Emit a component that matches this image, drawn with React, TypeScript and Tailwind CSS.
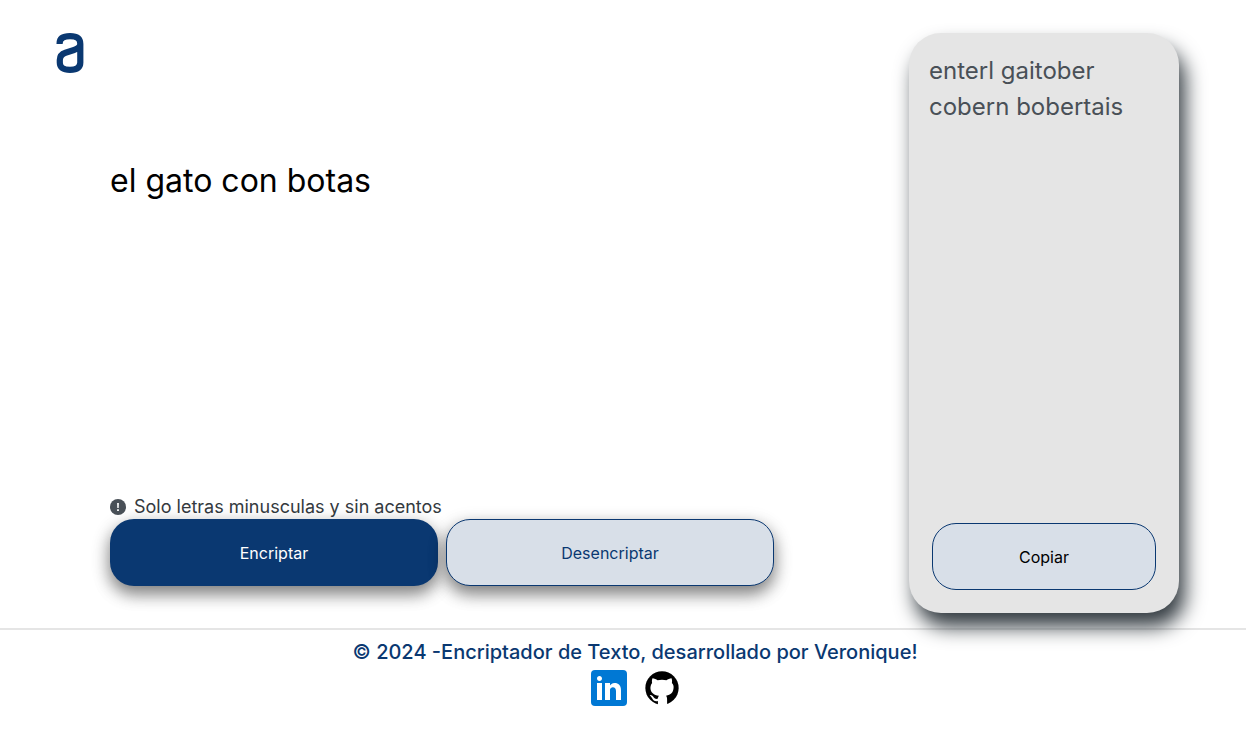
import { useState } from "react";

const initialText = "el gato con botas";
const initialResult = "enterl gaitober cobern bobertais";

const pairs: [string, string][] = [
  ["e", "enter"],
  ["i", "imes"],
  ["a", "ai"],
  ["o", "ober"],
  ["u", "ufat"],
];

function encrypt(text: string) {
  return text.replace(/[eiaou]/g, (letter) => pairs.find(([plain]) => plain === letter)![1]);
}

function decrypt(text: string) {
  return pairs.reduce((acc, [plain, coded]) => acc.split(coded).join(plain), text);
}

function Logo() {
  return (
    <svg className="h-10 w-7" viewBox="0 0 28 40" fill="none" stroke="#0a3871" strokeWidth="6.2" aria-hidden="true">
      <path d="M3.6 11V10.500C3.6 5.600 7 3.200 14 3.200C21 3.200 24.300 5.600 24.300 11V29.500C24.300 34.500 21 36.800 14 36.800C7 36.800 3.800 34.500 3.800 29.500V27C3.800 23 5.500 21 9.500 19.700L18 17C22 15.700 24.300 14 24.300 11" />
    </svg>
  );
}

function AlertIcon() {
  return (
    <svg className="size-4" viewBox="0 0 16 16" aria-hidden="true">
      <circle cx="8" cy="8" r="8" fill="#495057" />
      <path d="M7.100 4h1.800l-.2 5H7.300zM7.100 10.200h1.800V12H7.100z" fill="#fff" />
    </svg>
  );
}

function LinkedinIcon() {
  return (
    <svg className="size-9" viewBox="6 6 36 36" aria-hidden="true">
      <rect x="6" y="6" width="36" height="36" rx="4" fill="#0078d4" />
      <path
        fill="#fff"
        d="M12 19h5v17h-5zM14.485 17h-.028C12.965 17 12 15.888 12 14.499 12 13.080 12.995 12 14.514 12c1.521 0 2.458 1.080 2.486 2.499C17 15.887 16.035 17 14.485 17zM36 36h-5v-9.099c0-2.198-1.225-3.698-3.192-3.698-1.501 0-2.313 1.012-2.707 1.990C24.957 25.543 25 26.511 25 27v9h-5V19h5v2.616C25.721 20.500 26.850 19 29.738 19c3.578 0 6.261 2.250 6.261 7.274L36 36z"
      />
    </svg>
  );
}

function GithubIcon() {
  return (
    <svg className="size-[34px]" viewBox="0 0 100 100" aria-hidden="true">
      <circle cx="50" cy="50" r="49" />
      <path
        fill="#fff"
        d="M22 21C27 21 33 24 37 27C45 25 55 25 63 27C67 24 73 21 78 21C80 26 80 31 79 35C83 39 85 44 84 50C83 63 76 70 62 73C64 76 65 79 65 84V100H38V88C30 90 24 87 21 80C19 76 17 74 14 71C20 70 23 74 26 78C29 82 33 83 38 81C38 78 39 75 41 73C26 71 16 63 16 50C16 44 18 39 21 35C20 31 20 26 22 21Z"
      />
    </svg>
  );
}

export default function App() {
  const [text, setText] = useState(initialText);
  const [result, setResult] = useState(initialResult);

  return (
    <div className="min-h-screen bg-white font-['Inter',sans-serif]">
      <div className="flex pt-[33px] pr-[67px] pb-[15px] pl-14">
        <header className="w-[54px] shrink-0">
          <a href="#" aria-label="Inicio" className="block w-7">
            <Logo />
          </a>
        </header>

        <main className="flex flex-1 justify-between">
          <section className="flex w-[664px] flex-col pt-[124px] pb-[27px]">
            <textarea
              aria-label="Texto"
              className="w-full flex-1 resize-none text-[32px] leading-12 text-black outline-none"
              value={text}
              onChange={(event) => setText(event.target.value)}
            />
            <p className="flex items-center gap-2 text-lg leading-6 text-[#343a40]">
              <AlertIcon />
              Solo letras minusculas y sin acentos
            </p>
            <div className="grid grid-cols-2 gap-2">
              <button
                type="button"
                onClick={() => setResult(encrypt(text))}
                className="h-[67px] rounded-3xl bg-[#0a3871] text-base text-white shadow-[0_8px_16px_rgba(0,0,0,0.4),0_6px_20px_rgba(0,0,0,0.19)]"
              >
                Encriptar
              </button>
              <button
                type="button"
                onClick={() => setResult(decrypt(text))}
                className="h-[67px] rounded-3xl border border-[#0a3871] bg-[#d8dfe8] text-base text-[#0a3871] shadow-[0_8px_16px_rgba(0,0,0,0.4),0_6px_20px_rgba(0,0,0,0.19)]"
              >
                Desencriptar
              </button>
            </div>
          </section>

          <aside className="flex h-[580px] w-[270px] flex-col rounded-[32px] bg-[#e5e5e5] px-5 pt-5 pb-[23px] shadow-[6px_14px_20px_#343c42]">
            <output className="flex-1 text-2xl leading-9 text-[#495057]">{result}</output>
            <button
              type="button"
              onClick={() => navigator.clipboard?.writeText(result)}
              className="mx-[3px] h-[67px] rounded-3xl border border-[#0a3871] bg-[#d8dfe8] text-base text-black"
            >
              Copiar
            </button>
          </aside>
        </main>
      </div>

      <footer className="flex flex-col items-center border-t-2 border-[#e5e5e5] pt-2 pl-6">
        <p className="text-xl leading-7 font-medium text-[#0a3871]">
          © 2024 -Encriptador de Texto, desarrollado por Veronique!
        </p>
        <div className="mt-1 flex items-center gap-[18px]">
          <a href="#" aria-label="LinkedIn">
            <LinkedinIcon />
          </a>
          <a href="#" aria-label="GitHub">
            <GithubIcon />
          </a>
        </div>
      </footer>
    </div>
  );
}
